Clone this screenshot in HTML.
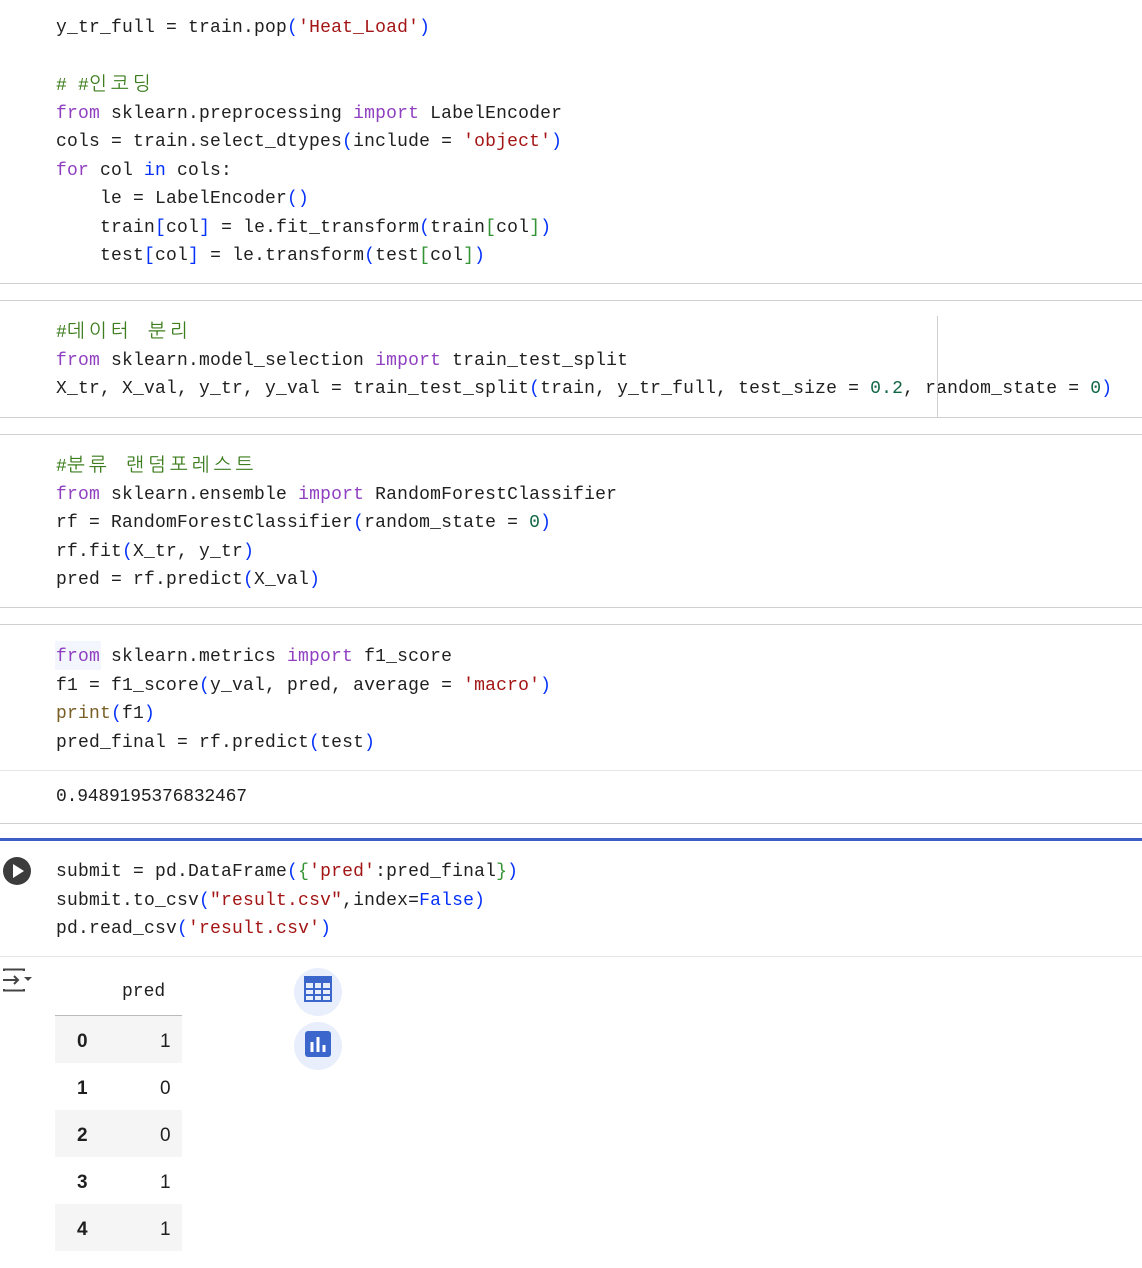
<!DOCTYPE html>
<html><head><meta charset="utf-8"><style>
body{margin:0;width:1142px;height:1268px;background:#fff;position:relative;overflow:hidden;font-family:"Liberation Mono","NanumGothic",monospace;font-size:18px;letter-spacing:0.2px;color:#1f1f1f}
.l{position:absolute;left:56px;white-space:pre;height:28px;line-height:28px;margin-top:2px}
.k{color:#8f3fc0}.s{color:#a31515}.p{color:#0431fa}.c{color:#3c7d1e}.n{color:#116644}.b{color:#319331}.f{color:#795e26}
.ko{letter-spacing:4px;font-size:19px}
.hr{position:absolute;left:0;width:1142px;height:1px;background:#d0d0d0}
.t{position:absolute;font-family:"Liberation Sans",sans-serif;font-size:19px;letter-spacing:0;margin-top:2px}
</style></head><body>
<div class="l" style="top:12px">y_tr_full = train.pop<span class="p">(</span><span class="s">'Heat_Load'</span><span class="p">)</span></div>
<div class="l c" style="top:69px"># #<span class="ko">인코딩</span></div>
<div class="l" style="top:98px"><span class="k">from</span> sklearn.preprocessing <span class="k">import</span> LabelEncoder</div>
<div class="l" style="top:126px">cols = train.select_dtypes<span class="p">(</span>include = <span class="s">'object'</span><span class="p">)</span></div>
<div class="l" style="top:155px"><span class="k">for</span> col <span class="p">in</span> cols:</div>
<div class="l" style="top:183px">    le = LabelEncoder<span class="p">()</span></div>
<div class="l" style="top:212px">    train<span class="p">[</span>col<span class="p">]</span> = le.fit_transform<span class="p">(</span>train<span class="b">[</span>col<span class="b">]</span><span class="p">)</span></div>
<div class="l" style="top:240px">    test<span class="p">[</span>col<span class="p">]</span> = le.transform<span class="p">(</span>test<span class="b">[</span>col<span class="b">]</span><span class="p">)</span></div>
<div class="hr" style="top:283px"></div><div class="hr" style="top:300px"></div>

<div class="l c" style="top:316px">#<span class="ko">데이터 분리</span></div>
<div class="l" style="top:345px"><span class="k">from</span> sklearn.model_selection <span class="k">import</span> train_test_split</div>
<div class="l" style="top:373px">X_tr, X_val, y_tr, y_val = train_test_split<span class="p">(</span>train, y_tr_full, test_size = <span class="n">0.2</span>, random_state = <span class="n">0</span><span class="p">)</span></div>
<div style="position:absolute;left:937px;top:316px;width:1px;height:101px;background:#d0d0d0"></div>
<div class="hr" style="top:417px"></div><div class="hr" style="top:434px"></div>

<div class="l c" style="top:450px">#<span class="ko">분류 랜덤포레스트</span></div>
<div class="l" style="top:479px"><span class="k">from</span> sklearn.ensemble <span class="k">import</span> RandomForestClassifier</div>
<div class="l" style="top:507px">rf = RandomForestClassifier<span class="p">(</span>random_state = <span class="n">0</span><span class="p">)</span></div>
<div class="l" style="top:536px">rf.fit<span class="p">(</span>X_tr, y_tr<span class="p">)</span></div>
<div class="l" style="top:564px">pred = rf.predict<span class="p">(</span>X_val<span class="p">)</span></div>
<div class="hr" style="top:607px"></div><div class="hr" style="top:624px"></div>

<div style="position:absolute;left:55px;top:641px;width:46px;height:29px;background:#f3f6fc"></div>
<div class="l" style="top:641px"><span class="k">from</span> sklearn.metrics <span class="k">import</span> f1_score</div>
<div class="l" style="top:670px">f1 = f1_score<span class="p">(</span>y_val, pred, average = <span class="s">'macro'</span><span class="p">)</span></div>
<div class="l" style="top:698px"><span class="f">print</span><span class="p">(</span>f1<span class="p">)</span></div>
<div class="l" style="top:727px">pred_final = rf.predict<span class="p">(</span>test<span class="p">)</span></div>
<div class="hr" style="top:770px;background:#e6e6e6"></div>
<div class="l" style="top:781px;letter-spacing:-0.2px">0.9489195376832467</div>
<div class="hr" style="top:823px"></div>
<div style="position:absolute;left:0;top:838px;width:1142px;height:3px;background:#3b5fc7"></div>

<svg style="position:absolute;left:3px;top:857px" width="28" height="28" viewBox="0 0 28 28"><circle cx="14" cy="14" r="14" fill="#3c3c3c"/><path d="M10 7 L21 14 L10 21 Z" fill="#fff"/></svg>
<div class="l" style="top:856px">submit = pd.DataFrame<span class="p">(</span><span class="b">{</span><span class="s">'pred'</span>:pred_final<span class="b">}</span><span class="p">)</span></div>
<div class="l" style="top:885px">submit.to_csv<span class="p">(</span><span class="s">"result.csv"</span>,index=<span class="p">False</span><span class="p">)</span></div>
<div class="l" style="top:913px">pd.read_csv<span class="p">(</span><span class="s">'result.csv'</span><span class="p">)</span></div>
<div class="hr" style="top:956px;background:#e6e6e6"></div>

<svg style="position:absolute;left:2px;top:968px" width="30" height="26" viewBox="0 0 30 26"><path d="M2 3 V1.5 H22 V3 M2 21 V22.5 H22 V21 M1 12 H16 M12 8 L16 12 L12 16" fill="none" stroke="#444" stroke-width="2"/><path d="M22 9 H30 L26 13 Z" fill="#444"/></svg>

<div class="t" style="left:122px;top:980px;font-family:'Liberation Mono',monospace;font-size:18px">pred</div>
<div style="position:absolute;left:55px;top:1015px;width:127px;height:1px;background:#bbb"></div>
<div style="position:absolute;left:55px;top:1016px;width:127px;height:47px;background:#f5f5f5"></div>
<div style="position:absolute;left:55px;top:1110px;width:127px;height:47px;background:#f5f5f5"></div>
<div style="position:absolute;left:55px;top:1204px;width:127px;height:47px;background:#f5f5f5"></div>
<div class="t" style="left:77px;top:1029px;font-weight:bold">0</div><div class="t" style="left:160px;top:1029px">1</div>
<div class="t" style="left:77px;top:1076px;font-weight:bold">1</div><div class="t" style="left:160px;top:1076px">0</div>
<div class="t" style="left:77px;top:1123px;font-weight:bold">2</div><div class="t" style="left:160px;top:1123px">0</div>
<div class="t" style="left:77px;top:1170px;font-weight:bold">3</div><div class="t" style="left:160px;top:1170px">1</div>
<div class="t" style="left:77px;top:1217px;font-weight:bold">4</div><div class="t" style="left:160px;top:1217px">1</div>

<div style="position:absolute;left:294px;top:968px;width:48px;height:48px;border-radius:50%;background:#e8eefc"></div>
<svg style="position:absolute;left:304px;top:975px" width="28" height="28" viewBox="0 0 28 28"><rect x="1" y="2" width="26" height="24" fill="none" stroke="#3b66cc" stroke-width="2"/><rect x="1" y="2" width="26" height="6" fill="#3b66cc"/><path d="M1 14 H27 M1 20 H27 M10 8 V26 M18 8 V26" stroke="#3b66cc" stroke-width="2"/></svg>
<div style="position:absolute;left:294px;top:1022px;width:48px;height:48px;border-radius:50%;background:#e8eefc"></div>
<svg style="position:absolute;left:304px;top:1030px" width="28" height="28" viewBox="0 0 28 28"><rect x="1" y="1" width="26" height="26" rx="3" fill="#3b66cc"/><path d="M8 12 V22 M14 7 V22 M20 15 V22" stroke="#fff" stroke-width="3"/></svg>
</body></html>
